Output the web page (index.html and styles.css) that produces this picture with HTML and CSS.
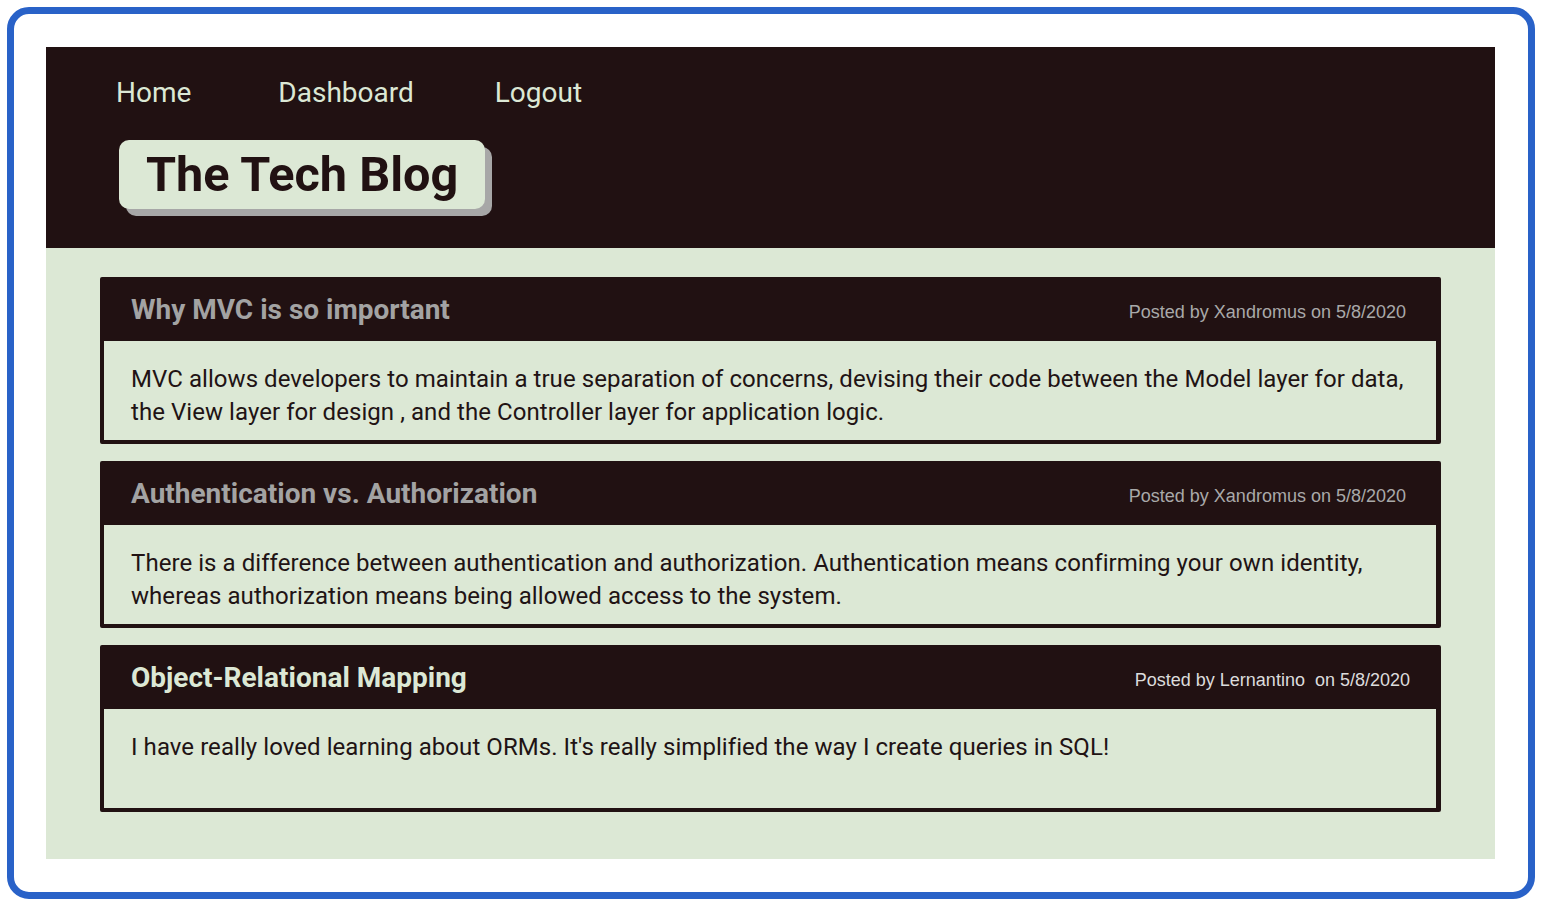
FILE: index.html
```html
<!DOCTYPE html>
<html lang="en">
<head>
<meta charset="utf-8">
<title>The Tech Blog</title>
<link rel="stylesheet" href="styles.css">
</head>
<body>
<div class="frame">
  <div class="page">
    <header class="site-header">
      <nav class="nav">
        <a class="nav-link" href="#">Home</a>
        <a class="nav-link" href="#">Dashboard</a>
        <a class="nav-link" href="#">Logout</a>
      </nav>
      <h1 class="brand">The Tech Blog</h1>
    </header>
    <main class="posts">
      <article class="post">
        <div class="post-head">
          <h2 class="post-title">Why MVC is so important</h2>
          <span class="post-meta">Posted by Xandromus on 5/8/2020</span>
        </div>
        <div class="post-body">
          <p>MVC allows developers to maintain a true separation of concerns, devising their code between the Model layer for data, the View layer for design , and the Controller layer for application logic.</p>
        </div>
      </article>
      <article class="post">
        <div class="post-head">
          <h2 class="post-title">Authentication vs. Authorization</h2>
          <span class="post-meta">Posted by Xandromus on 5/8/2020</span>
        </div>
        <div class="post-body">
          <p>There is a difference between authentication and authorization. Authentication means confirming your own identity, whereas authorization means being allowed access to the system.</p>
        </div>
      </article>
      <article class="post post-light">
        <div class="post-head">
          <h2 class="post-title">Object-Relational Mapping</h2>
          <span class="post-meta">Posted by Lernantino&nbsp; on 5/8/2020</span>
        </div>
        <div class="post-body">
          <p>I have really loved learning about ORMs. It's really simplified the way I create queries in SQL!</p>
        </div>
      </article>
    </main>
  </div>
</div>
</body>
</html>
```

FILE: styles.css
```css
* { box-sizing: border-box; }

html, body {
  margin: 0;
  padding: 0;
  background: #ffffff;
}

body {
  font-family: Roboto, "Noto Sans", Arial, sans-serif;
  color: #211314;
}

.frame {
  margin: 7px;
  width: 1528px;
  height: 892px;
  border: 7px solid #2962c8;
  border-radius: 22px;
  padding: 33px 33px 0 32px;
  background: #ffffff;
}

.page {
  width: 1449px;
}

.site-header {
  background: #211112;
  height: 201px;
  padding: 29px 0 0 70px;
}

.nav {
  display: flex;
  gap: 87px;
  height: 33px;
}

.nav-link {
  font-family: Roboto, sans-serif;
  font-size: 28px;
  line-height: 33px;
  color: #dce8d5;
  text-decoration: none;
}

.nav-link + .nav-link + .nav-link {
  margin-left: -6px;
}

.brand {
  display: inline-block;
  margin: 31px 0 0 3px;
  padding: 7px 27px 6px 27px;
  font-family: Roboto, sans-serif;
  font-weight: 700;
  font-size: 48.6px;
  line-height: 56px;
  color: #211112;
  background: #dce8d5;
  border-radius: 10px;
  box-shadow: 7px 7px 0 #a7a7a7;
}

.posts {
  background: #dce8d5;
  height: 611px;
  padding: 29px 54px 0 54px;
  display: flex;
  flex-direction: column;
  gap: 17px;
}

.post {
  height: 167px;
  border: 4px solid #211112;
  border-right-width: 5px;
  border-radius: 2px;
  display: flex;
  flex-direction: column;
}

.post-head {
  height: 60px;
  background: #211112;
  display: flex;
  align-items: center;
  justify-content: space-between;
  padding: 0 30px 3px 27px;
}

.post-title {
  margin: 0;
  font-family: Roboto, sans-serif;
  font-weight: 700;
  font-size: 28px;
  line-height: 32px;
  color: #a3a3a3;
}

.post-meta {
  font-family: "Liberation Sans", Arial, sans-serif;
  font-size: 18px;
  line-height: 22px;
  color: #a9a9a9;
  margin-top: 4px;
}

.post-light .post-title { color: #dce8d5; }
.post-light .post-meta { color: #dcdcdc; }
.post-light .post-head { padding-right: 26px; }

.post-body {
  flex: 1;
  padding: 22px 27px 0 27px;
}

.post-body p {
  margin: 0;
  font-family: Roboto, sans-serif;
  font-size: 24px;
  line-height: 33px;
  letter-spacing: 0.06px;
  color: #211314;
}
```
